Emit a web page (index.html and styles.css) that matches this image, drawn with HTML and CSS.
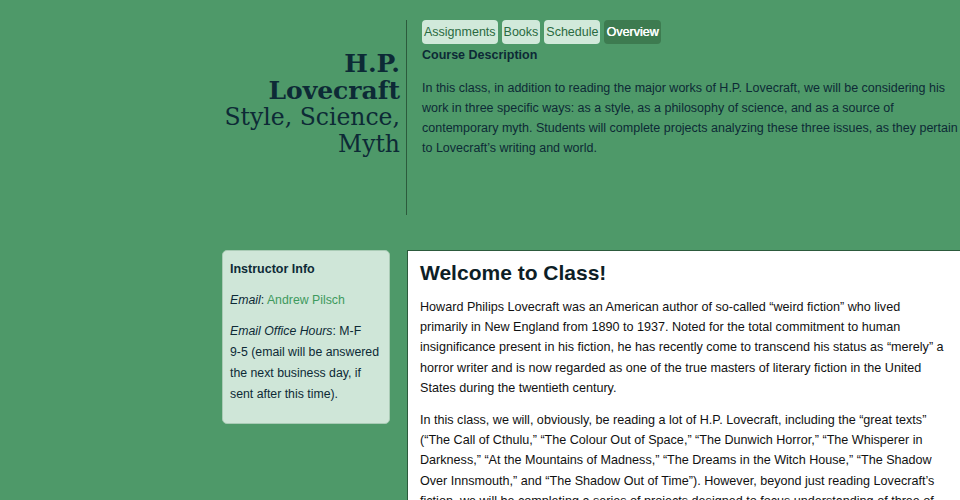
FILE: index.html
```html
<!DOCTYPE html>
<html>
<head>
<meta charset="utf-8">
<link rel="stylesheet" href="styles.css">
</head>
<body>
<div class="page">
  <header class="header">
    <div class="brand">
      <h1 class="title"><span class="title-main">H.P. Lovecraft</span><span class="title-sub">Style, Science, Myth</span></h1>
    </div>
    <div class="intro">
      <nav class="tabs">
        <a class="tab">Assignments</a>
        <a class="tab">Books</a>
        <a class="tab">Schedule</a>
        <a class="tab tab-active">Overview</a>
      </nav>
      <h2 class="desc-title">Course Description</h2>
      <p class="desc">In this class, in addition to reading the major works of H.P. Lovecraft, we will be considering his work in three specific ways: as a style, as a philosophy of science, and as a source of contemporary myth. Students will complete projects analyzing these three issues, as they pertain to Lovecraft’s writing and world.</p>
    </div>
  </header>
  <div class="body">
    <aside class="sidebar">
      <h3 class="side-title">Instructor Info</h3>
      <p class="side-p"><em>Email</em>: <a class="link">Andrew Pilsch</a></p>
      <p class="side-p"><em>Email Office Hours</em>: M-F <span class="nowrap">9-5</span> (email will be answered the next business day, if sent after this time).</p>
    </aside>
    <main class="content">
      <h2 class="content-title">Welcome to Class!</h2>
      <p class="content-p">Howard Philips Lovecraft was an American author of so-called “weird fiction” who lived primarily in New England from 1890 to 1937. Noted for the total commitment to human insignificance present in his fiction, he has recently come to transcend his status as “merely” a horror writer and is now regarded as one of the true masters of literary fiction in the United States during the twentieth century.</p>
      <p class="content-p">In this class, we will, obviously, be reading a lot of H.P. Lovecraft, including the “great texts” (“The Call of Cthulu,” “The Colour Out of Space,” “The Dunwich Horror,” “The Whisperer in Darkness,” “At the Mountains of Madness,” “The Dreams in the Witch House,” “The Shadow Over Innsmouth,” and “The Shadow Out of Time”). However, beyond just reading Lovecraft’s fiction, we will be completing a series of projects designed to focus understanding of three of his major contributions to contemporary culture.</p>
    </main>
  </div>
</div>
</body>
</html>
```
FILE: styles.css
```css
html, body {
  margin: 0;
  padding: 0;
}
body {
  background: #4e9969;
  font-family: "Liberation Sans", Arial, sans-serif;
  color: #0d2a36;
  height: 500px;
  overflow: hidden;
}
.page {
  padding-top: 20px;
}
.header {
  display: grid;
  grid-template-columns: 187px 1fr;
  padding-left: 220px;
  height: 195px;
}
.brand {
  border-right: 1px solid #2c5a3c;
  padding-right: 6px;
  text-align: right;
}
.title {
  margin: 30px 0 0;
  font-family: "DejaVu Serif", Georgia, serif;
  font-weight: normal;
  color: #0d2a36;
}
.title-main {
  display: block;
  font-weight: bold;
  font-size: 25px;
  line-height: 27px;
}
.title-sub {
  display: block;
  font-size: 23.5px;
  line-height: 27px;
}
.intro {
  padding-left: 15px;
}
.tabs {
  display: flex;
  gap: 4px;
}
.tab {
  display: block;
  background: #d1e9da;
  color: #2a6a3f;
  font-size: 12.5px;
  line-height: 24px;
  padding: 0 2px;
  border-radius: 4px;
}
.tab-active {
  background: #3d7b50;
  color: #ffffff;
  padding: 0 2px;
  text-shadow: 0.4px 0 0 #ffffff;
}
.desc-title {
  font-size: 12.5px;
  font-weight: bold;
  margin: 4px 0 0;
  line-height: 15px;
}
.desc {
  font-size: 12.5px;
  line-height: 20px;
  margin: 15px 0 0;
}
.body {
  display: grid;
  grid-template-columns: 168px 1fr;
  column-gap: 17px;
  padding-left: 222px;
  margin-top: 35px;
}
.sidebar {
  align-self: start;
  background: #cfe6d8;
  border: 1px solid #a9cbb5;
  border-radius: 5px;
  padding: 8px 9px 18px 7px;
  font-size: 12.3px;
  line-height: 21px;
}
.nowrap {
  white-space: nowrap;
}
.side-title {
  font-size: 12.5px;
  font-weight: bold;
  margin: 0 0 10px;
  line-height: 21px;
}
.side-p {
  margin: 0 0 10px;
}
.side-p:last-child {
  margin-bottom: 0;
}
.link {
  color: #3e9a5e;
}
.content {
  background: #ffffff;
  border-left: 1px solid #2c5a3c;
  border-top: 1px solid #2c5a3c;
  padding: 8px 13px 0 12px;
  min-height: 300px;
}
.content-title {
  font-size: 21px;
  font-weight: bold;
  margin: 0 0 10px;
  line-height: 28px;
  color: #0d1e26;
}
.content-p {
  font-size: 12.6px;
  line-height: 20.2px;
  margin: 0 0 12px;
  color: #111;
}
```
